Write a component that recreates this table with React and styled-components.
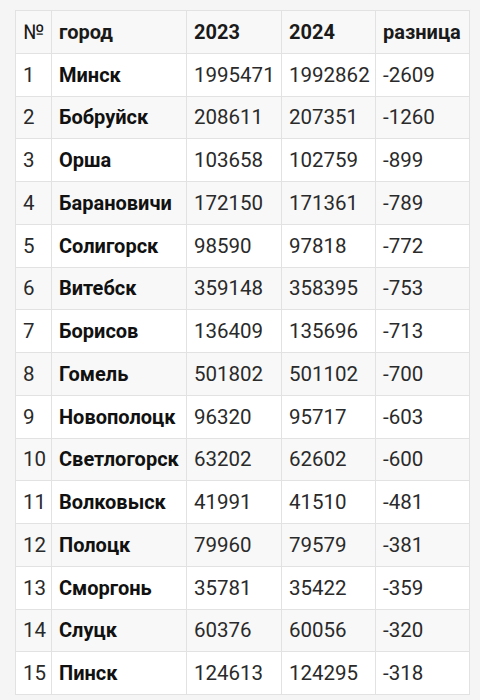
import React from "react";
import styled, { createGlobalStyle } from "styled-components";

const GlobalStyle = createGlobalStyle`
  html, body {
    margin: 0;
    padding: 0;
    background: #f5f5f5;
  }
`;

const rows = [
  [1, "Минск", 1995471, 1992862, -2609],
  [2, "Бобруйск", 208611, 207351, -1260],
  [3, "Орша", 103658, 102759, -899],
  [4, "Барановичи", 172150, 171361, -789],
  [5, "Солигорск", 98590, 97818, -772],
  [6, "Витебск", 359148, 358395, -753],
  [7, "Борисов", 136409, 135696, -713],
  [8, "Гомель", 501802, 501102, -700],
  [9, "Новополоцк", 96320, 95717, -603],
  [10, "Светлогорск", 63202, 62602, -600],
  [11, "Волковыск", 41991, 41510, -481],
  [12, "Полоцк", 79960, 79579, -381],
  [13, "Сморгонь", 35781, 35422, -359],
  [14, "Слуцк", 60376, 60056, -320],
  [15, "Пинск", 124613, 124295, -318],
];

const Page = styled.div`
  padding: 10px 12px 0 15px;
  font-family: Roboto, "Noto Sans", sans-serif;
`;

const Table = styled.table`
  border-collapse: collapse;
  table-layout: fixed;
  width: 454px;
  font-size: 20.5px;
  color: #222;
`;

const Row = styled.tr`
  height: 42.75px;
  background: ${({ $shade }) => ($shade ? "#f8f8f8" : "#ffffff")};
`;

const Cell = styled.td`
  border: 1px solid #e2e2e2;
  padding: 0 2px 0 7px;
  white-space: nowrap;
  font-size: ${({ $bold }) => ($bold ? "20px" : "20.5px")};
  font-weight: ${({ $bold }) => ($bold ? 700 : 400)};
  color: ${({ $bold }) => ($bold ? "#111" : "#2a2a2a")};
`;

const Head = styled.th`
  border: 1px solid #e2e2e2;
  padding: 0 2px 0 7px;
  text-align: left;
  white-space: nowrap;
  font-size: ${({ $light }) => ($light ? "20.5px" : "20px")};
  font-weight: ${({ $light }) => ($light ? 400 : 700)};
  color: #1a1a1a;
`;

export default function App() {
  return (
    <>
      <GlobalStyle />
      <Page>
        <Table>
          <colgroup>
            <col style={{ width: 36 }} />
            <col style={{ width: 135 }} />
            <col style={{ width: 95 }} />
            <col style={{ width: 94 }} />
            <col style={{ width: 94 }} />
          </colgroup>
          <thead>
            <Row $shade>
              <Head $light>№</Head>
              <Head>город</Head>
              <Head>2023</Head>
              <Head>2024</Head>
              <Head>разница</Head>
            </Row>
          </thead>
          <tbody>
            {rows.map(([n, city, a, b, d]) => (
              <Row key={n} $shade={n % 2 === 0}>
                <Cell>{n}</Cell>
                <Cell $bold>{city}</Cell>
                <Cell>{a}</Cell>
                <Cell>{b}</Cell>
                <Cell>{d}</Cell>
              </Row>
            ))}
          </tbody>
        </Table>
      </Page>
    </>
  );
}
